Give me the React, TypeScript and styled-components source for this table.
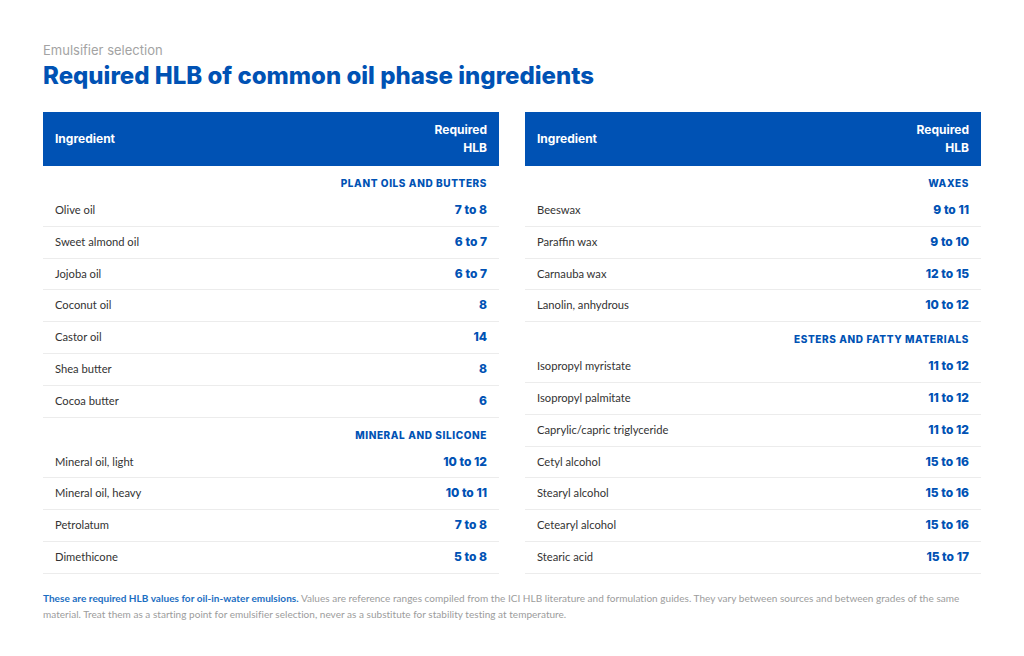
import React from "react";
import styled, { createGlobalStyle } from "styled-components";

const GlobalStyle = createGlobalStyle`
  html, body { margin: 0; padding: 0; background: #ffffff; }
  body { font-family: "Lato", "Liberation Sans", sans-serif; color: #333; }
  * { box-sizing: border-box; }
`;

const BLUE = "#0052b4";
const HEAD_FONT = `"Inter", "Liberation Sans", sans-serif`;

const Page = styled.div`
  width: 1024px;
  padding: 42px 43px 30px 43px;
`;

const Eyebrow = styled.div`
  font-family: ${HEAD_FONT};
  font-size: 13px;
  line-height: 16px;
  color: #a3a3a3;
  font-weight: 400;
`;

const Title = styled.h1`
  margin: 3px 0 0 0;
  font-family: ${HEAD_FONT};
  font-size: 24px;
  line-height: 30px;
  font-weight: 800;
  color: ${BLUE};
`;

const Columns = styled.div`
  display: flex;
  gap: 26px;
  margin-top: 21px;
  align-items: flex-start;
`;

const Table = styled.table`
  flex: 1;
  border-collapse: collapse;
  width: 456px;
`;

const HeadCell = styled.th<{ $right?: boolean }>`
  background: ${BLUE};
  color: #fff;
  font-family: ${HEAD_FONT};
  font-weight: 700;
  font-size: 12px;
  line-height: 18px;
  padding: 9px 12px;
  height: 54px;
  text-align: ${(p) => (p.$right ? "right" : "left")};
  width: ${(p) => (p.$right ? "80px" : "auto")};
`;

const SectionCell = styled.td`
  font-family: ${HEAD_FONT};
  font-weight: 800;
  font-size: 10px;
  letter-spacing: 0.6px;
  text-transform: uppercase;
  color: ${BLUE};
  text-align: right;
  padding: 11px 12px 5px 12px;
  line-height: 13px;
`;

const Row = styled.tr`
  border-bottom: 1px solid #ececec;
`;

const NameCell = styled.td`
  font-family: "Lato", "Liberation Sans", sans-serif;
  font-size: 11.2px;
  color: #333;
  padding: 8px 12px;
  line-height: 14.8px;
`;

const ValueCell = styled.td`
  font-family: ${HEAD_FONT};
  font-weight: 800;
  font-size: 12px;
  color: ${BLUE};
  text-align: right;
  padding: 8px 12px;
  line-height: 14.8px;
  white-space: nowrap;
`;

const Note = styled.p`
  margin: 16px 0 0 0;
  font-family: "Lato", "Liberation Sans", sans-serif;
  font-size: 10px;
  line-height: 16px;
  letter-spacing: 0.03px;
  color: #9c9c9c;
`;

const NoteLead = styled.strong`
  color: #1b6ec2;
  font-weight: 700;
`;

type Group = { title: string; rows: [string, string][] };

const left: Group[] = [
  {
    title: "Plant oils and butters",
    rows: [
      ["Olive oil", "7 to 8"],
      ["Sweet almond oil", "6 to 7"],
      ["Jojoba oil", "6 to 7"],
      ["Coconut oil", "8"],
      ["Castor oil", "14"],
      ["Shea butter", "8"],
      ["Cocoa butter", "6"],
    ],
  },
  {
    title: "Mineral and silicone",
    rows: [
      ["Mineral oil, light", "10 to 12"],
      ["Mineral oil, heavy", "10 to 11"],
      ["Petrolatum", "7 to 8"],
      ["Dimethicone", "5 to 8"],
    ],
  },
];

const right: Group[] = [
  {
    title: "Waxes",
    rows: [
      ["Beeswax", "9 to 11"],
      ["Paraffin wax", "9 to 10"],
      ["Carnauba wax", "12 to 15"],
      ["Lanolin, anhydrous", "10 to 12"],
    ],
  },
  {
    title: "Esters and fatty materials",
    rows: [
      ["Isopropyl myristate", "11 to 12"],
      ["Isopropyl palmitate", "11 to 12"],
      ["Caprylic/capric triglyceride", "11 to 12"],
      ["Cetyl alcohol", "15 to 16"],
      ["Stearyl alcohol", "15 to 16"],
      ["Cetearyl alcohol", "15 to 16"],
      ["Stearic acid", "15 to 17"],
    ],
  },
];

function HlbTable({ groups }: { groups: Group[] }) {
  return (
    <Table>
      <thead>
        <tr>
          <HeadCell>Ingredient</HeadCell>
          <HeadCell $right>
            Required
            <br />
            HLB
          </HeadCell>
        </tr>
      </thead>
      <tbody>
        {groups.map((g) => (
          <React.Fragment key={g.title}>
            <tr>
              <SectionCell colSpan={2}>{g.title}</SectionCell>
            </tr>
            {g.rows.map(([name, val]) => (
              <Row key={name}>
                <NameCell>{name}</NameCell>
                <ValueCell>{val}</ValueCell>
              </Row>
            ))}
          </React.Fragment>
        ))}
      </tbody>
    </Table>
  );
}

export default function App() {
  return (
    <Page>
      <GlobalStyle />
      <Eyebrow>Emulsifier selection</Eyebrow>
      <Title>Required HLB of common oil phase ingredients</Title>
      <Columns>
        <HlbTable groups={left} />
        <HlbTable groups={right} />
      </Columns>
      <Note>
        <NoteLead>These are required HLB values for oil-in-water emulsions.</NoteLead>{" "}
        Values are reference ranges compiled from the ICI HLB literature and formulation guides. They vary
        between sources and between grades of the same material. Treat them as a starting point for
        emulsifier selection, never as a substitute for stability testing at temperature.
      </Note>
    </Page>
  );
}
